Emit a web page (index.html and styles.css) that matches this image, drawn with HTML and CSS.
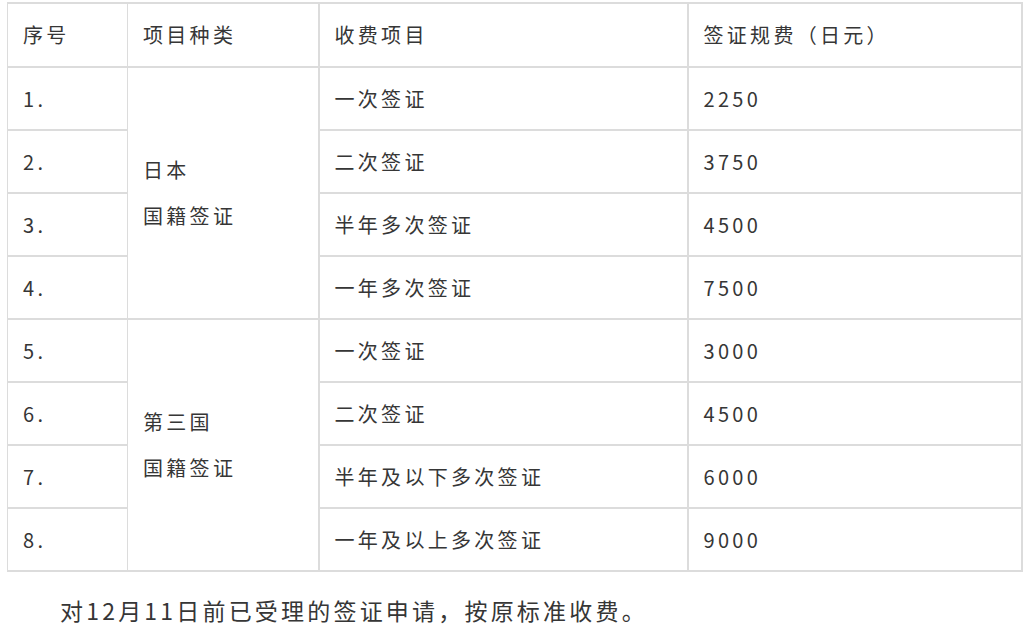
FILE: index.html
```html
<!DOCTYPE html>
<html lang="zh-CN">
<head>
<meta charset="utf-8">
<title>签证规费</title>
<link rel="stylesheet" href="styles.css">
</head>
<body>
<div class="page">
<table class="fees">
  <colgroup>
    <col class="c1"><col class="c2"><col class="c3"><col class="c4">
  </colgroup>
  <thead>
    <tr><th class="n">序号</th><th class="k">项目种类</th><th class="i">收费项目</th><th class="p">签证规费（日元）</th></tr>
  </thead>
  <tbody>
    <tr><td class="n">1.</td><td class="k" rowspan="4"><div class="kind"><span>日本</span><span>国籍签证</span></div></td><td class="i">一次签证</td><td class="p">2250</td></tr>
    <tr><td class="n">2.</td><td class="i">二次签证</td><td class="p">3750</td></tr>
    <tr><td class="n">3.</td><td class="i">半年多次签证</td><td class="p">4500</td></tr>
    <tr><td class="n">4.</td><td class="i">一年多次签证</td><td class="p">7500</td></tr>
    <tr><td class="n">5.</td><td class="k" rowspan="4"><div class="kind"><span>第三国</span><span>国籍签证</span></div></td><td class="i">一次签证</td><td class="p">3000</td></tr>
    <tr><td class="n">6.</td><td class="i">二次签证</td><td class="p">4500</td></tr>
    <tr><td class="n">7.</td><td class="i">半年及以下多次签证</td><td class="p">6000</td></tr>
    <tr><td class="n">8.</td><td class="i">一年及以上多次签证</td><td class="p">9000</td></tr>
  </tbody>
</table>
<p class="note">对12月11日前已受理的签证申请，按原标准收费。</p>
</div>
</body>
</html>
```

FILE: styles.css
```css
html, body {
  margin: 0;
  padding: 0;
  background: #ffffff;
}
body {
  font-family: "Noto Sans CJK SC", "Noto Sans", sans-serif;
  color: #363636;
}
.page {
  padding: 2px 4px 0 7px;
}
.fees {
  border-collapse: collapse;
  table-layout: fixed;
  width: 1016px;
  font-size: 20px;
  letter-spacing: 3.3px;
}
.c1 { width: 120px; }
.c2 { width: 191px; }
.c3 { width: 369px; }
.c4 { width: auto; }
.fees th, .fees td {
  border: 2px solid #dcdcdc;
  padding: 0 0 0 15px;
  text-align: left;
  font-weight: normal;
  vertical-align: middle;
  line-height: 28px;
}
.fees th { height: 62px; }
.fees td { height: 61px; }
.fees .n { border-left-width: 1px; border-right-width: 1px; }
.fees .k { border-left-width: 1px; }
.kind {
  display: flex;
  flex-direction: column;
  gap: 18px;
}
.note {
  margin: 22px 0 0 53px;
  font-size: 23px;
  letter-spacing: 3.2px;
  line-height: 32px;
}
```
